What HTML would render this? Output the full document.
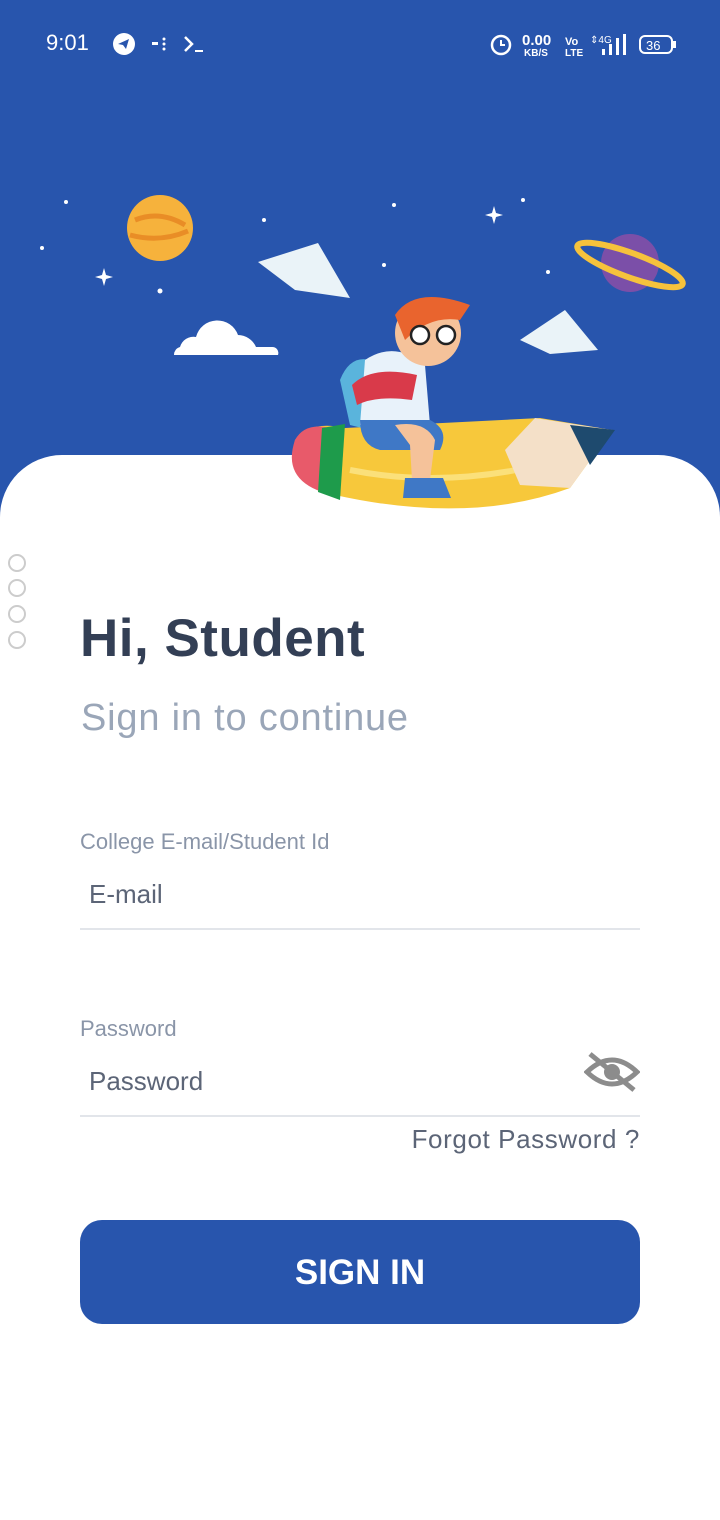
<!DOCTYPE html>
<html><head><meta charset="utf-8"><style>
*{margin:0;padding:0;box-sizing:border-box}
body{width:720px;height:1520px;background:#fff;font-family:"Liberation Sans",sans-serif;position:relative;overflow:hidden}
.top{position:absolute;left:0;top:0;width:720px;height:520px;background:#2855ad}
.panel{position:absolute;left:0;top:455px;width:720px;height:1065px;background:#fff;border-radius:62px 62px 0 0}
.sb{position:absolute;top:30px;color:#fff;font-size:22px}
.t{position:absolute;color:#334155;white-space:nowrap}
.line{position:absolute;left:80px;width:560px;height:2px;background:#e2e5ea}
.dot{position:absolute;left:8px;width:18px;height:18px;border:2px solid #ccc;border-radius:50%;background:#fff}
</style></head><body>
<div class="top"></div>
<div class="sb" style="left:46px">9:01</div>
<svg style="position:absolute;left:112px;top:32px" width="110" height="24">
<circle cx="12" cy="12" r="11" fill="#fff"/><path d="M6 12 L17 7 L14 17 L11 13 Z" fill="#2855ad"/>
<rect x="40" y="10" width="6" height="3" fill="#fff"/><circle cx="52" cy="7" r="1.5" fill="#fff"/><circle cx="52" cy="12" r="1.5" fill="#fff"/><circle cx="52" cy="17" r="1.5" fill="#fff"/>
<path d="M73 5 L80 12 L73 19" stroke="#fff" stroke-width="2.5" fill="none"/><rect x="83" y="18" width="8" height="2" fill="#fff"/>
</svg>
<svg style="position:absolute;left:488px;top:30px" width="190" height="28">
<circle cx="13" cy="15" r="9" stroke="#fff" stroke-width="2.5" fill="none"/><path d="M13 10v5h4" stroke="#fff" stroke-width="2" fill="none"/>
<text x="34" y="15" fill="#fff" font-size="15" font-weight="bold" font-family="Liberation Sans">0.00</text>
<text x="36" y="26" fill="#fff" font-size="10" font-weight="bold" font-family="Liberation Sans">KB/S</text>
<text x="77" y="15" fill="#fff" font-size="11" font-weight="bold" font-family="Liberation Sans">Vo</text>
<text x="77" y="26" fill="#fff" font-size="10" font-weight="bold" font-family="Liberation Sans">LTE</text>
<text x="102" y="13" fill="#fff" font-size="10" font-family="Liberation Sans">⇕4G</text>
<rect x="114" y="19" width="3" height="6" fill="#fff"/><rect x="121" y="14" width="3" height="11" fill="#fff"/><rect x="128" y="8" width="3" height="17" fill="#fff"/><rect x="135" y="4" width="3" height="21" fill="#fff"/>
<rect x="152" y="6" width="32" height="17" rx="5" stroke="#fff" stroke-width="2" fill="none"/><rect x="185" y="11" width="3" height="7" fill="#fff"/>
<text x="158" y="20" fill="#fff" font-size="13" font-family="Liberation Sans">36</text>
</svg>
<div class="panel"></div>
<!-- illustration -->
<svg style="position:absolute;left:0;top:0" width="720" height="530">
<g fill="#fff"><circle cx="66" cy="202" r="2"/><circle cx="42" cy="248" r="2"/><circle cx="160" cy="291" r="2.5"/><circle cx="264" cy="220" r="2"/><circle cx="394" cy="205" r="2"/><circle cx="384" cy="265" r="2"/><circle cx="523" cy="200" r="2"/><circle cx="548" cy="272" r="2"/>
<path d="M104 268l2 7 7 2-7 2-2 7-2-7-7-2 7-2z"/><path d="M494 206l2 7 7 2-7 2-2 7-2-7-7-2 7-2z"/>
<path d="M174 355 h104 a6 6 0 0 0 -6 -8 h-16 a20 20 0 0 0 -18 -12 a22 22 0 0 0 -42 2 a14 14 0 0 0 -16 10 a8 8 0 0 0 -6 8z"/>
<path d="M258 262 L318 243 L350 298 L295 290Z" fill="#eaf3f8"/><path d="M520 340 L565 310 L598 350 L550 354Z" fill="#eaf3f8"/></g>
<circle cx="160" cy="228" r="33" fill="#f6b23c"/><path d="M135 220 q25 -10 50 5 M130 235 q30 8 58 -4" stroke="#e98d26" stroke-width="5" fill="none"/>
<circle cx="630" cy="263" r="29" fill="#7b4fa8"/><ellipse cx="630" cy="265" rx="56" ry="12" transform="rotate(20 630 265)" stroke="#f6c23c" stroke-width="6" fill="none"/>
<path d="M295 440 Q310 420 345 428 L540 418 L612 430 L570 488 Q470 525 335 495 Q285 480 295 440Z" fill="#f7c83b"/>
<path d="M350 470 Q450 490 560 460" stroke="#fbe07a" stroke-width="6" fill="none"/>
<path d="M295 440 Q305 422 330 428 L322 492 Q282 478 295 440Z" fill="#e85a6a"/>
<path d="M322 428 L345 424 L340 500 L318 492Z" fill="#1e9b4b"/>
<path d="M505 450 L535 418 L612 430 L570 488 L520 485Z" fill="#f4e0c8"/><path d="M570 425 L615 430 L590 465Z" fill="#1e4a6e"/>
<path d="M340 380 q10-25 30-20 l0 70 -20 -5z" fill="#5ab4dc"/>
<path d="M365 360 q30-20 60 5 l5 60 -70 0z" fill="#e8f2fa"/>
<path d="M360 420 h70 q20 10 10 30 h-60 q-20 -5 -20 -30z" fill="#3f78c6"/>
<path d="M395 425 q30 -5 40 15 l-5 40 h-18 l-2-35z" fill="#f5c29a"/>
<circle cx="428" cy="333" r="33" fill="#f5c29a"/><path d="M395 315 q20-30 75-10 l-10 15 q-30 -5 -55 20z" fill="#e9642e"/>
<circle cx="420" cy="335" r="9" fill="#fff" stroke="#222" stroke-width="2.5"/><circle cx="446" cy="335" r="9" fill="#fff" stroke="#222" stroke-width="2.5"/>
<path d="M352 385 q20-20 65-10 l-5 25 q-35 -5 -55 5z" fill="#d93a4a"/>
<path d="M405 478 h38 l8 20 h-48z" fill="#3f78c6"/>
</svg>
<div class="dot" style="top:554px"></div><div class="dot" style="top:579px"></div><div class="dot" style="top:605px"></div><div class="dot" style="top:631px"></div>
<div class="t" style="left:80px;top:608px;font-size:53px;font-weight:bold;color:#333f55;letter-spacing:0.5px">Hi, Student</div>
<div class="t" style="left:81px;top:697px;font-size:38px;color:#9aa6b8;letter-spacing:0.8px">Sign in to continue</div>
<div class="t" style="left:80px;top:829px;font-size:22px;color:#8a95a8">College E-mail/Student Id</div>
<div class="t" style="left:89px;top:879px;font-size:26px;color:#5c6577">E-mail</div>
<div class="line" style="top:928px"></div>
<div class="t" style="left:80px;top:1016px;font-size:22px;color:#8a95a8">Password</div>
<div class="t" style="left:89px;top:1066px;font-size:26px;color:#5c6577">Password</div>
<svg style="position:absolute;left:584px;top:1050px" width="56" height="44"><path d="M3 22 Q28 -2 53 22 Q28 46 3 22Z" fill="none" stroke="#8c8c8c" stroke-width="5"/><circle cx="28" cy="22" r="8" fill="#8c8c8c"/><path d="M6 4 L50 40" stroke="#8c8c8c" stroke-width="5"/></svg>
<div class="line" style="top:1115px"></div>
<div class="t" style="right:80px;top:1124px;font-size:26px;color:#5c6577;letter-spacing:0.6px">Forgot Password ?</div>
<div style="position:absolute;left:80px;top:1220px;width:560px;height:104px;border-radius:22px;background:#2855ad;color:#fff;font-size:35px;font-weight:bold;text-align:center;line-height:106px">SIGN IN</div>
</body></html>
